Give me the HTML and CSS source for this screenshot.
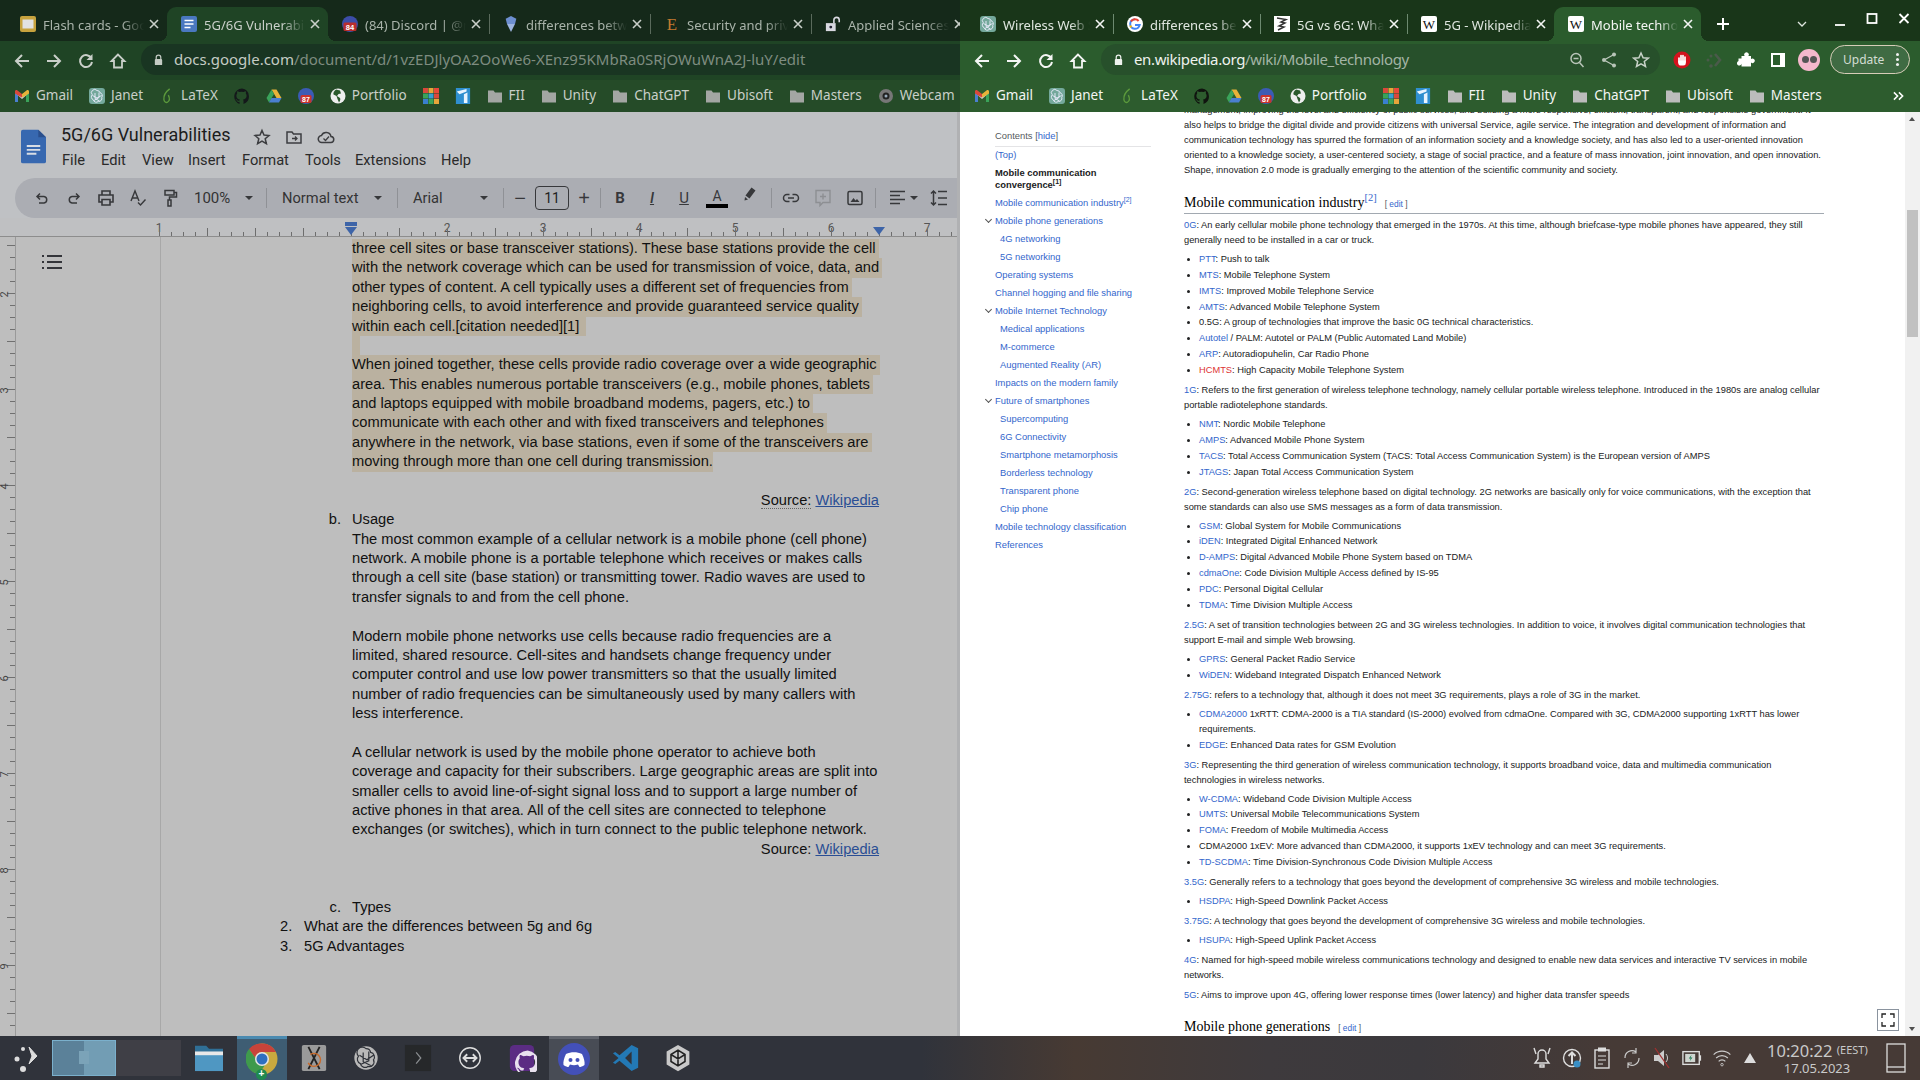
FILE: index.html
```html
<!DOCTYPE html>
<html lang="en">
<head>
<meta charset="utf-8">
<title>Desktop</title>
<link rel="stylesheet" href="styles.css">
</head>
<body>
<svg class="defs" width="0" height="0">
  <symbol id="i-x" viewBox="0 0 12 12"><path d="M2 2l8 8M10 2l-8 8" fill="none" stroke="currentColor" stroke-width="1.600"/></symbol>
  <symbol id="i-back" viewBox="0 0 18 18"><path d="M16 9H3M9 3L3 9l6 6" fill="none" stroke="currentColor" stroke-width="2"/></symbol>
  <symbol id="i-fwd" viewBox="0 0 18 18"><path d="M2 9h13M9 3l6 6-6 6" fill="none" stroke="currentColor" stroke-width="2"/></symbol>
  <symbol id="i-reload" viewBox="0 0 18 18"><path d="M14.500 6.500A6 6 0 1 0 15 10" fill="none" stroke="currentColor" stroke-width="2"/><path d="M15.500 2v6h-6z" fill="currentColor"/></symbol>
  <symbol id="i-home" viewBox="0 0 18 18"><path d="M9 2.500L2.500 9H5v6.500h8V9h2.500z" fill="none" stroke="currentColor" stroke-width="1.800"/></symbol>
  <symbol id="i-lock" viewBox="0 0 12 14"><path d="M3.500 6V4.200a2.500 2.500 0 0 1 5 0V6" fill="none" stroke="currentColor" stroke-width="1.300"/><rect x="2" y="6" width="8" height="6.500" rx="1" fill="currentColor"/></symbol>
  <symbol id="i-folder" viewBox="0 0 16 16"><path d="M1 2.500h5.500L8 4.500h7v10H1z" fill="currentColor"/></symbol>
  <symbol id="i-gmail" viewBox="0 0 16 14"><path d="M1 13V2l7 6 7-6v11h-3V6.500L8 10 4 6.500V13z" fill="#cfcfcf"/><path d="M1 5V2.500C1 1 2.500.6 3.500 1.400L8 5 8 8.500z" fill="#d9483b"/><path d="M15 5V2.500c0-1.500-1.500-1.900-2.500-1.100L8 5v3.500z" fill="#e8b23a"/><path d="M1 4.500V13h3V6.500z" fill="#4a7fd0"/><path d="M15 4.500V13h-3V6.500z" fill="#3aa35a"/></symbol>
  <symbol id="i-gpt" viewBox="0 0 16 16"><rect width="16" height="16" rx="3" fill="#74a89b"/><path d="M8 2.500a3 3 0 0 1 3 2.200 3 3 0 0 1 1.700 4.700 3 3 0 0 1-3.400 4 3 3 0 0 1-5-1.600 3 3 0 0 1-1-5A3 3 0 0 1 8 2.500zM6 5v5.500l4.500 2.500M10 4.500v5L5 12.500M3.500 7.500L8 10l4.500-2.500" fill="none" stroke="#eef" stroke-width=".9"/></symbol>
  <symbol id="i-latex" viewBox="0 0 16 18"><path d="M11 1C7 4 4 8 4.500 13c.2 2.500 2.500 4 4 3C11 14.500 11 11 9.500 8" fill="none" stroke="#5c9a3c" stroke-width="1.500"/></symbol>
  <symbol id="i-github" viewBox="0 0 16 16"><path d="M8 .5a8 8 0 0 0-2.500 15.500v-2.200c-2.200.5-2.700-1-2.700-1-.4-1-.9-1.200-.9-1.200-.7-.5 0-.5 0-.5.800.1 1.200.8 1.200.8.700 1.200 1.900.9 2.400.7 0-.5.300-.9.500-1.100-1.800-.2-3.600-.9-3.600-4 0-.9.300-1.600.800-2.100-.1-.2-.3-1 .1-2.100 0 0 .7-.2 2.200.8a7.500 7.500 0 0 1 4 0c1.500-1 2.200-.8 2.200-.8.400 1.100.2 1.900.1 2.100.5.5.8 1.200.8 2.100 0 3.100-1.900 3.800-3.700 4 .3.300.6.800.6 1.500V16A8 8 0 0 0 8 .5z" fill="currentColor"/></symbol>
  <symbol id="i-drive" viewBox="0 0 16 15"><path d="M5.500 1h5l5 8.500h-5z" fill="#e8b23a"/><path d="M5.500 1L.5 9.500 3 14l5-8.500z" fill="#3aa35a"/><path d="M3 14h10l2.500-4.500h-10z" fill="#4a7fd0"/></symbol>
  <symbol id="i-cal" viewBox="0 0 16 16"><circle cx="8" cy="8" r="8" fill="#3b5bb5"/><rect x="2.500" y="7" width="11" height="8" rx="1.500" fill="#c8332d"/><text x="8" y="13.500" font-family="Liberation Sans" font-size="7" font-weight="700" fill="#fff" text-anchor="middle">87</text></symbol>
  <symbol id="i-globe" viewBox="0 0 16 16"><circle cx="8" cy="8" r="7.500" fill="#eee"/><path d="M6 1.500C4 3 3 5 3.500 6.500l3 1.500 1 3 1.500 3.500c1.500-2 1.500-3.500 1-4.500L7 8 8.500 6 11 5.500 10 2.500z" fill="#2a5a2c"/></symbol>
  <symbol id="i-tink" viewBox="0 0 16 16"><rect width="5" height="5" fill="#d9483b"/><rect x="5.500" width="5" height="5" fill="#e8a53a"/><rect x="11" width="5" height="5" fill="#e8483b"/><rect y="5.500" width="5" height="5" fill="#3aa35a"/><rect x="5.500" y="5.500" width="5" height="5" fill="#3aa0d0"/><rect x="11" y="5.500" width="5" height="5" fill="#d9483b"/><rect y="11" width="5" height="5" fill="#3a7fd0"/><rect x="5.500" y="11" width="5" height="5" fill="#3aa35a"/><rect x="11" y="11" width="5" height="5" fill="#e8a53a"/></symbol>
  <symbol id="i-flag" viewBox="0 0 16 18"><rect width="16" height="18" fill="#2f8fd0"/><path d="M1 4l11-3v3L4 7z M9 7l4-2v12H9z" fill="#e8f4ff"/></symbol>
  <symbol id="i-wiki" viewBox="0 0 16 16"><rect width="16" height="16" rx="2" fill="#fff"/><text x="8" y="13" font-family="Liberation Serif" font-size="13" fill="#111" text-anchor="middle">W</text></symbol>
</svg>

<div class="desktop">
  <section class="window dim">
    <div class="tabstrip">
      <div class="tab"><svg class="favicon" viewBox="0 0 16 16"><rect width="16" height="16" rx="2" fill="#c7a33e"/><rect x="2.500" y="3.500" width="11" height="9" fill="#e2e2e2"/></svg><span class="title">Flash cards - Google</span><svg class="close"><use href="#i-x"/></svg></div>
      <div class="tab active"><svg class="favicon" viewBox="0 0 16 16"><rect width="16" height="16" rx="2" fill="#4a78c0"/><path d="M3.500 4.500h9M3.500 8h9M3.500 11.500h6" stroke="#fff" stroke-width="1.600"/></svg><span class="title">5G/6G Vulnerabilities</span><svg class="close"><use href="#i-x"/></svg></div>
      <div class="tab"><svg class="favicon" viewBox="0 0 16 16"><circle cx="8" cy="8" r="8" fill="#3c4da8"/><rect x="1.500" y="6.500" width="13" height="8.500" rx="1.500" fill="#b92d2d"/><text x="8" y="13.500" font-family="Liberation Sans" font-size="7.500" font-weight="700" fill="#fff" text-anchor="middle">84</text></svg><span class="title">(84) Discord | @me | Discord</span><svg class="close"><use href="#i-x"/></svg></div>
      <i class="tabsep"></i>
      <div class="tab"><svg class="favicon" viewBox="0 0 16 18"><path d="M2 3l6-3 6 3-1.500 6H3.500z" fill="#6d8fd0"/><path d="M3.500 9h9L8 18z" fill="#9db5e0"/></svg><span class="title">differences between</span><svg class="close"><use href="#i-x"/></svg></div>
      <i class="tabsep"></i>
      <div class="tab"><svg class="favicon" viewBox="0 0 16 18"><text x="8" y="16" font-family="Liberation Serif" font-size="19" fill="#c27a30" text-anchor="middle">E</text></svg><span class="title">Security and privacy</span><svg class="close"><use href="#i-x"/></svg></div>
      <i class="tabsep"></i>
      <div class="tab"><svg class="favicon" viewBox="0 0 16 18"><path d="M9 8V4.500a3 3 0 0 1 6 0V7" fill="none" stroke="#d8d8e0" stroke-width="1.800"/><rect y="8" width="11" height="9" fill="#d8d8e0"/><circle cx="5.500" cy="12.500" r="1.600" fill="#223"/></svg><span class="title">Applied Sciences</span><svg class="close"><use href="#i-x"/></svg></div>
    </div>
    <div class="toolbar">
      <div class="navs">
        <svg class="nav"><use href="#i-back"/></svg><svg class="nav"><use href="#i-fwd"/></svg><svg class="nav"><use href="#i-reload"/></svg><svg class="nav"><use href="#i-home"/></svg>
      </div>
      <div class="omni"><svg class="lock"><use href="#i-lock"/></svg><span class="url"><b>docs.google.com</b>/document/d/1vzEDJlyOA2OoWe6-XEnz95KMbRa0SRjOWuWnA2J-luY/edit</span></div>
    </div>
    <div class="bookmarks">
      <span class="bm"><svg class="bi"><use href="#i-gmail"/></svg>Gmail</span>
      <span class="bm"><svg class="bi"><use href="#i-gpt"/></svg>Janet</span>
      <span class="bm"><svg class="bi"><use href="#i-latex"/></svg>LaTeX</span>
      <span class="bm only ghd"><svg class="bi"><use href="#i-github"/></svg></span>
      <span class="bm only"><svg class="bi"><use href="#i-drive"/></svg></span>
      <span class="bm only"><svg class="bi"><use href="#i-cal"/></svg></span>
      <span class="bm"><svg class="bi"><use href="#i-globe"/></svg>Portfolio</span>
      <span class="bm only"><svg class="bi"><use href="#i-tink"/></svg></span>
      <span class="bm only"><svg class="bi"><use href="#i-flag"/></svg></span>
      <span class="bm"><svg class="bi fold"><use href="#i-folder"/></svg>FII</span>
      <span class="bm"><svg class="bi fold"><use href="#i-folder"/></svg>Unity</span>
      <span class="bm"><svg class="bi fold"><use href="#i-folder"/></svg>ChatGPT</span>
      <span class="bm"><svg class="bi fold"><use href="#i-folder"/></svg>Ubisoft</span>
      <span class="bm"><svg class="bi fold"><use href="#i-folder"/></svg>Masters</span>
      <span class="bm"><svg class="bi" viewBox="0 0 16 16"><circle cx="8" cy="8" r="7" fill="#777"/><circle cx="8" cy="8" r="3.500" fill="#222"/><circle cx="8" cy="8" r="1.500" fill="#9ab"/></svg>Webcam</span>
    </div>

    <div class="docs">
      <header class="docs-head">
        <svg class="docs-logo" viewBox="0 0 26 35"><path d="M2 0h16l8 8v25a2 2 0 0 1-2 2H2a2 2 0 0 1-2-2V2a2 2 0 0 1 2-2z" fill="#3768b0"/><path d="M18 0l8 8h-8z" fill="#2a4f8c"/><path d="M6 17h14M6 21h14M6 25h10" stroke="#d8dde5" stroke-width="2"/></svg>
        <div class="docs-titles">
          <div class="docs-titlerow">
            <span class="docs-title">5G/6G Vulnerabilities</span>
            <svg class="ti" viewBox="0 0 18 18"><path d="M9 2.500l2 4.600 5 .4-3.800 3.300 1.200 4.900L9 13.100l-4.400 2.600 1.200-4.900L2 7.500l5-.4z" fill="none" stroke="#3c3d40" stroke-width="1.500"/></svg>
            <svg class="ti" viewBox="0 0 18 18"><path d="M2 4h5l1.500 2H16v9H2z" fill="none" stroke="#3c3d40" stroke-width="1.500"/><path d="M7 10.500h5M10 8.500l2 2-2 2" fill="none" stroke="#3c3d40" stroke-width="1.300"/></svg>
            <svg class="ti" viewBox="0 0 18 18"><path d="M5 14.500a3.500 3.500 0 0 1-.5-7A5 5 0 0 1 14 8.500a3 3 0 0 1-.5 6z" fill="none" stroke="#3c3d40" stroke-width="1.500"/><path d="M6.500 10.500L8.500 12.500 12 8.500" fill="none" stroke="#3c3d40" stroke-width="1.300"/></svg>
          </div>
          <nav class="menu"><span class="m1">File</span><span class="m2">Edit</span><span class="m3">View</span><span class="m4">Insert</span><span class="m5">Format</span><span class="m6">Tools</span><span class="m7">Extensions</span><span>Help</span></nav>
        </div>
      </header>
      <div class="pill">
        <svg class="ic" viewBox="0 0 20 20"><path d="M7 15h5a3.300 3.300 0 0 0 0-6.500H5M8 5.500l-3 3 3 3" fill="none" stroke="#37383b" stroke-width="1.500"/></svg>
        <svg class="ic" viewBox="0 0 20 20"><path d="M13 15H8a3.300 3.300 0 0 1 0-6.500h7M12 5.500l3 3-3 3" fill="none" stroke="#37383b" stroke-width="1.500"/></svg>
        <svg class="ic" viewBox="0 0 20 20"><path d="M6 7V3h8v4M6 14H3V7h14v7h-3M6 11.500h8V17H6z" fill="none" stroke="#37383b" stroke-width="1.600"/></svg>
        <svg class="ic" viewBox="0 0 20 20"><path d="M3 13L7 3l4 10M4.500 10h5M10 14.500l2.500 2.500 5-5.500" fill="none" stroke="#37383b" stroke-width="1.400"/></svg>
        <svg class="ic" viewBox="0 0 20 20"><path d="M5 2.500h9V7H5zM14 4.500h2.500v4.500H9.500v3M8 12h3v6H8z" fill="none" stroke="#37383b" stroke-width="1.500"/></svg>
        <span class="drop zoomv">100%<i class="caret"></i></span><i class="psep"></i>
        <span class="drop stylev">Normal text<i class="caret"></i></span><i class="psep"></i>
        <span class="drop fontv">Arial<i class="caret"></i></span><i class="psep"></i>
        <span class="pm first">−</span><span class="size">11</span><span class="pm">+</span><i class="psep after-plus"></i>
        <span class="fmt b">B</span><span class="fmt it">I</span><span class="fmt un">U</span><span class="fmt ca">A</span>
        <svg class="ic pen" viewBox="0 0 20 20"><path d="M11.500 2.500l4 3-6 8-4-3zM5 12l3 2.500-3.500 1z" fill="#37383b"/></svg><i class="psep after-pen"></i>
        <svg class="ic link" viewBox="0 0 20 20"><path d="M8.500 6.500H6a3.500 3.500 0 0 0 0 7h2.500M11.500 6.500H14a3.500 3.500 0 0 1 0 7h-2.500M7 10h6" fill="none" stroke="#37383b" stroke-width="1.500"/></svg>
        <svg class="ic" viewBox="0 0 20 20"><path d="M3 2.500h14v12H10l-3 3v-3H3z" fill="none" stroke="#8d8f93" stroke-width="1.400"/><path d="M10 5.500v6M7 8.500h6" stroke="#8d8f93" stroke-width="1.400"/></svg>
        <svg class="ic" viewBox="0 0 20 20"><rect x="3" y="3.500" width="14" height="13" rx="1.500" fill="none" stroke="#37383b" stroke-width="1.500"/><path d="M5.500 14l3-4 2 2.500 1.500-1.500 2.500 3z" fill="#37383b"/></svg><i class="psep after-img"></i>
        <span class="align"><svg class="ic" viewBox="0 0 20 20"><path d="M2 3.500h15M2 7.500h10M2 11.500h15M2 15.500h10" stroke="#37383b" stroke-width="1.600"/></svg><i class="caret"></i></span>
        <svg class="ic" viewBox="0 0 20 20"><path d="M9 3.500h9M9 10h9M9 16.500h9M4.500 3v14M2 5.500L4.500 3 7 5.500M2 14.500L4.500 17 7 14.500" fill="none" stroke="#37383b" stroke-width="1.500"/></svg>
      </div>
      <div class="ruler">
        <span></span><span>1</span><span></span><span></span><span>2</span><span>3</span><span>4</span><span>5</span><span>6</span><span>7</span>
        <i class="mark left"></i><i class="mark right"></i>
      </div>
      <div class="docbody">
        <div class="vruler"><span>2</span><span>3</span><span>4</span><span>5</span><span>6</span><span>7</span><span>8</span><span>9</span></div>
        <aside class="outline"><svg viewBox="0 0 20 16" width="20" height="16"><path d="M5 2h15M5 8h15M5 14h15" stroke="#34353a" stroke-width="2"/><path d="M0 2h2M0 8h2M0 14h2" stroke="#34353a" stroke-width="2"/></svg></aside>
        <article class="page">
          <div class="ln hl">three cell sites or base transceiver stations). These base stations provide the cell</div>
          <div class="ln hl">with the network coverage which can be used for transmission of voice, data, and</div>
          <div class="ln hl">other types of content. A cell typically uses a different set of frequencies from</div>
          <div class="ln hl">neighboring cells, to avoid interference and provide guaranteed service quality</div>
          <div class="ln hl">within each cell.[citation needed][1]&nbsp;</div>
          <div class="ln hl blankhl">&nbsp;</div>
          <div class="ln hl">When joined together, these cells provide radio coverage over a wide geographic</div>
          <div class="ln hl">area. This enables numerous portable transceivers (e.g., mobile phones, tablets</div>
          <div class="ln hl">and laptops equipped with mobile broadband modems, pagers, etc.) to</div>
          <div class="ln hl">communicate with each other and with fixed transceivers and telephones</div>
          <div class="ln hl">anywhere in the network, via base stations, even if some of the transceivers are</div>
          <div class="ln hl nopad">moving through more than one cell during transmission.</div>
          <div class="ln">&nbsp;</div>
          <div class="ln src"><span class="dotted">Source:</span> <a>Wikipedia</a></div>
          <div class="ln"><span class="num">b.</span>Usage</div>
          <div class="ln">The most common example of a cellular network is a mobile phone (cell phone)</div>
          <div class="ln">network. A mobile phone is a portable telephone which receives or makes calls</div>
          <div class="ln">through a cell site (base station) or transmitting tower. Radio waves are used to</div>
          <div class="ln">transfer signals to and from the cell phone.</div>
          <div class="ln">&nbsp;</div>
          <div class="ln">Modern mobile phone networks use cells because radio frequencies are a</div>
          <div class="ln">limited, shared resource. Cell-sites and handsets change frequency under</div>
          <div class="ln">computer control and use low power transmitters so that the usually limited</div>
          <div class="ln">number of radio frequencies can be simultaneously used by many callers with</div>
          <div class="ln">less interference.</div>
          <div class="ln">&nbsp;</div>
          <div class="ln">A cellular network is used by the mobile phone operator to achieve both</div>
          <div class="ln">coverage and capacity for their subscribers. Large geographic areas are split into</div>
          <div class="ln">smaller cells to avoid line-of-sight signal loss and to support a large number of</div>
          <div class="ln">active phones in that area. All of the cell sites are connected to telephone</div>
          <div class="ln">exchanges (or switches), which in turn connect to the public telephone network.</div>
          <div class="ln src"><span>Source:</span> <a>Wikipedia</a></div>
          <div class="ln">&nbsp;</div>
          <div class="ln">&nbsp;</div>
          <div class="ln"><span class="num">c.</span>Types</div>
          <div class="ln outer"><span class="num">2.</span>What are the differences between 5g and 6g</div>
          <div class="ln outer"><span class="num">3.</span>5G Advantages</div>
        </article>
      </div>
    </div>
  </section>

  <section class="window light">
    <div class="tabstrip">
      <div class="tab rt"><svg class="favicon"><use href="#i-gpt"/></svg><span class="title">Wireless Web Security</span><svg class="close"><use href="#i-x"/></svg></div>
      <i class="tabsep"></i>
      <div class="tab rt"><svg class="favicon" viewBox="0 0 16 16"><circle cx="8" cy="8" r="8" fill="#fff"/><path d="M8 3.200a4.800 4.800 0 1 0 4.700 5.700H8" fill="none" stroke="#4285f4" stroke-width="2"/><path d="M4 5.300A4.800 4.800 0 0 1 11.600 5" fill="none" stroke="#ea4335" stroke-width="2"/><path d="M3.300 9.500a4.800 4.800 0 0 0 1 1.800" fill="none" stroke="#fbbc05" stroke-width="2"/></svg><span class="title">differences between</span><svg class="close"><use href="#i-x"/></svg></div>
      <i class="tabsep"></i>
      <div class="tab rt"><svg class="favicon" viewBox="0 0 16 16"><rect width="16" height="16" fill="#fff"/><path d="M3 2l9 1.500L7 6l4 1-6 3 5 1-6 3" fill="none" stroke="#333" stroke-width="1.400"/></svg><span class="title">5G vs 6G: What are</span><svg class="close"><use href="#i-x"/></svg></div>
      <i class="tabsep"></i>
      <div class="tab rt"><svg class="favicon"><use href="#i-wiki"/></svg><span class="title">5G - Wikipedia</span><svg class="close"><use href="#i-x"/></svg></div>
      <div class="tab rt active"><svg class="favicon"><use href="#i-wiki"/></svg><span class="title">Mobile technology</span><svg class="close"><use href="#i-x"/></svg></div>
      <svg class="plus" viewBox="0 0 14 14"><path d="M7 1v12M1 7h12" stroke="#fff" stroke-width="2"/></svg>
      <div class="winctl">
        <svg viewBox="0 0 12 12"><path d="M2 4l4 4 4-4" fill="none" stroke="#dfe6df" stroke-width="1.300"/></svg>
        <svg viewBox="0 0 12 12"><path d="M1 8h10" stroke="#fff" stroke-width="1.800"/></svg>
        <svg viewBox="0 0 12 12"><rect x="1.500" y="1" width="9" height="9" fill="none" stroke="#fff" stroke-width="1.800"/></svg>
        <svg viewBox="0 0 12 12"><path d="M1.500 1l9 9M10.500 1l-9 9" stroke="#fff" stroke-width="1.800"/></svg>
      </div>
    </div>
    <div class="toolbar">
      <div class="navs">
        <svg class="nav"><use href="#i-back"/></svg><svg class="nav"><use href="#i-fwd"/></svg><svg class="nav"><use href="#i-reload"/></svg><svg class="nav"><use href="#i-home"/></svg>
      </div>
      <div class="omni short"><svg class="lock"><use href="#i-lock"/></svg><span class="url"><b>en.wikipedia.org</b>/wiki/Mobile_technology</span>
        <span class="omni-ics">
          <svg viewBox="0 0 18 18"><circle cx="8" cy="7.500" r="5" fill="none" stroke="#b8c4b8" stroke-width="1.500"/><path d="M11.500 11.500l4 4.500M5.500 7.500h5" stroke="#b8c4b8" stroke-width="1.500"/></svg>
          <svg viewBox="0 0 18 18"><circle cx="14" cy="3.500" r="2" fill="#b8c4b8"/><circle cx="4" cy="9" r="2" fill="#b8c4b8"/><circle cx="14" cy="14.500" r="2" fill="#b8c4b8"/><path d="M14 3.500L4 9l10 5.500" fill="none" stroke="#b8c4b8" stroke-width="1.300"/></svg>
          <svg viewBox="0 0 18 18"><path d="M9 2l2.100 4.800 5.100.4-3.900 3.300 1.200 5L9 12.800l-4.500 2.700 1.200-5-3.900-3.300 5.100-.4z" fill="none" stroke="#c8d2c8" stroke-width="1.500"/></svg>
        </span>
      </div>
      <div class="ext">
        <svg viewBox="0 0 18 18"><circle cx="9" cy="9" r="8.500" fill="#d4121d"/><path d="M6 11V7M8 11V4.500M10 11V4.500M12 11V6" stroke="#fff" stroke-width="1.700" stroke-linecap="round"/><path d="M5.200 9.500h7.600v2.500a2.500 2.500 0 0 1-2.500 2.500H8a2.800 2.800 0 0 1-2.800-2.800z" fill="#fff"/></svg>
        <svg viewBox="0 0 18 18"><path d="M10 3l5 6-5 6" fill="none" stroke="#4a5a4a" stroke-width="2.600"/><circle cx="3" cy="9" r="1.500" fill="#4a5a4a"/><circle cx="6" cy="5" r="1.500" fill="#4a5a4a"/><circle cx="6" cy="15" r="1.800" fill="#4a5a4a"/></svg>
        <svg viewBox="0 0 18 18"><path d="M1.500 7.500h3V5h3.200a2.300 2.300 0 1 1 3.600 0H14v3a2.300 2.300 0 1 1 0 3.600V15.500H4.500v-2.700a2.300 2.300 0 1 1-3-2.700z" fill="#fff"/></svg>
        <svg viewBox="0 0 18 18"><path d="M2 2h14v14H2z" fill="#fff"/><path d="M4 4h7v10H4z" fill="#2b5c2d"/></svg>
        <span class="avatar"><i></i><i></i></span>
        <span class="update">Update<em></em></span>
      </div>
    </div>
    <div class="bookmarks">
      <span class="bm"><svg class="bi"><use href="#i-gmail"/></svg>Gmail</span>
      <span class="bm"><svg class="bi"><use href="#i-gpt"/></svg>Janet</span>
      <span class="bm"><svg class="bi"><use href="#i-latex"/></svg>LaTeX</span>
      <span class="bm only ghd"><svg class="bi"><use href="#i-github"/></svg></span>
      <span class="bm only"><svg class="bi"><use href="#i-drive"/></svg></span>
      <span class="bm only"><svg class="bi"><use href="#i-cal"/></svg></span>
      <span class="bm"><svg class="bi"><use href="#i-globe"/></svg>Portfolio</span>
      <span class="bm only"><svg class="bi"><use href="#i-tink"/></svg></span>
      <span class="bm only"><svg class="bi"><use href="#i-flag"/></svg></span>
      <span class="bm"><svg class="bi fold"><use href="#i-folder"/></svg>FII</span>
      <span class="bm"><svg class="bi fold"><use href="#i-folder"/></svg>Unity</span>
      <span class="bm"><svg class="bi fold"><use href="#i-folder"/></svg>ChatGPT</span>
      <span class="bm"><svg class="bi fold"><use href="#i-folder"/></svg>Ubisoft</span>
      <span class="bm"><svg class="bi fold"><use href="#i-folder"/></svg>Masters</span>
      <svg class="more" viewBox="0 0 12 10"><path d="M1 1l4 4-4 4M6.500 1l4 4-4 4" fill="none" stroke="#fff" stroke-width="1.700"/></svg>
    </div>

    <div class="wiki">
      <nav class="toc">
        <div class="toc-head">Contents <span class="lk-plain">[<a>hide</a>]</span></div>
        <a class="t">(Top)</a>
        <div class="t cur">Mobile communication convergence<sup>[1]</sup></div>
        <a class="t">Mobile communication industry<sup>[2]</sup></a>
        <a class="t tw">Mobile phone generations</a>
        <a class="t c">4G networking</a>
        <a class="t c">5G networking</a>
        <a class="t">Operating systems</a>
        <a class="t">Channel hogging and file sharing</a>
        <a class="t tw">Mobile Internet Technology</a>
        <a class="t c">Medical applications</a>
        <a class="t c">M-commerce</a>
        <a class="t c">Augmented Reality (AR)</a>
        <a class="t">Impacts on the modern family</a>
        <a class="t tw">Future of smartphones</a>
        <a class="t c">Supercomputing</a>
        <a class="t c">6G Connectivity</a>
        <a class="t c">Smartphone metamorphosis</a>
        <a class="t c">Borderless technology</a>
        <a class="t c">Transparent phone</a>
        <a class="t c">Chip phone</a>
        <a class="t">Mobile technology classification</a>
        <a class="t">References</a>
      </nav>
      <main class="article">
        <p>management, improving the level and efficiency of public services, and building a more responsive, efficient, transparent, and responsible government. It also helps to bridge the digital divide and provide citizens with universal Service, agile service. The integration and development of information and communication technology has spurred the formation of an information society and a knowledge society, and has also led to a user-oriented innovation oriented to a knowledge society, a user-centered society, a stage of social practice, and a feature of mass innovation, joint innovation, and open innovation. Shape, innovation 2.0 mode is gradually emerging to the attention of the scientific community and society.</p>
        <h2>Mobile communication industry<sup>[2]</sup><span class="edit">[ <a>edit</a> ]</span></h2>
        <p><a>0G</a>: An early cellular mobile phone technology that emerged in the 1970s. At this time, although briefcase-type mobile phones have appeared, they still generally need to be installed in a car or truck.</p>
        <ul>
          <li><a>PTT</a>: Push to talk</li>
          <li><a>MTS</a>: Mobile Telephone System</li>
          <li><a>IMTS</a>: Improved Mobile Telephone Service</li>
          <li><a>AMTS</a>: Advanced Mobile Telephone System</li>
          <li>0.5G: A group of technologies that improve the basic 0G technical characteristics.</li>
          <li><a>Autotel</a> / PALM: Autotel or PALM (Public Automated Land Mobile)</li>
          <li><a>ARP</a>: Autoradiopuhelin, Car Radio Phone</li>
          <li><a class="red">HCMTS</a>: High Capacity Mobile Telephone System</li>
        </ul>
        <p><a>1G</a>: Refers to the first generation of wireless telephone technology, namely cellular portable wireless telephone. Introduced in the 1980s are analog cellular portable radiotelephone standards.</p>
        <ul>
          <li><a>NMT</a>: Nordic Mobile Telephone</li>
          <li><a>AMPS</a>: Advanced Mobile Phone System</li>
          <li><a>TACS</a>: Total Access Communication System (TACS: Total Access Communication System) is the European version of AMPS</li>
          <li><a>JTAGS</a>: Japan Total Access Communication System</li>
        </ul>
        <p><a>2G</a>: Second-generation wireless telephone based on digital technology. 2G networks are basically only for voice communications, with the exception that some standards can also use SMS messages as a form of data transmission.</p>
        <ul>
          <li><a>GSM</a>: Global System for Mobile Communications</li>
          <li><a>iDEN</a>: Integrated Digital Enhanced Network</li>
          <li><a>D-AMPS</a>: Digital Advanced Mobile Phone System based on TDMA</li>
          <li><a>cdmaOne</a>: Code Division Multiple Access defined by IS-95</li>
          <li><a>PDC</a>: Personal Digital Cellular</li>
          <li><a>TDMA</a>: Time Division Multiple Access</li>
        </ul>
        <p><a>2.5G</a>: A set of transition technologies between 2G and 3G wireless technologies. In addition to voice, it involves digital communication technologies that support E-mail and simple Web browsing.</p>
        <ul>
          <li><a>GPRS</a>: General Packet Radio Service</li>
          <li><a>WiDEN</a>: Wideband Integrated Dispatch Enhanced Network</li>
        </ul>
        <p><a>2.75G</a>: refers to a technology that, although it does not meet 3G requirements, plays a role of 3G in the market.</p>
        <ul>
          <li><a>CDMA2000</a> 1xRTT: CDMA-2000 is a TIA standard (IS-2000) evolved from cdmaOne. Compared with 3G, CDMA2000 supporting 1xRTT has lower requirements.</li>
          <li><a>EDGE</a>: Enhanced Data rates for GSM Evolution</li>
        </ul>
        <p><a>3G</a>: Representing the third generation of wireless communication technology, it supports broadband voice, data and multimedia communication technologies in wireless networks.</p>
        <ul>
          <li><a>W-CDMA</a>: Wideband Code Division Multiple Access</li>
          <li><a>UMTS</a>: Universal Mobile Telecommunications System</li>
          <li><a>FOMA</a>: Freedom of Mobile Multimedia Access</li>
          <li>CDMA2000 1xEV: More advanced than CDMA2000, it supports 1xEV technology and can meet 3G requirements.</li>
          <li><a>TD-SCDMA</a>: Time Division-Synchronous Code Division Multiple Access</li>
        </ul>
        <p><a>3.5G</a>: Generally refers to a technology that goes beyond the development of comprehensive 3G wireless and mobile technologies.</p>
        <ul>
          <li><a>HSDPA</a>: High-Speed Downlink Packet Access</li>
        </ul>
        <p><a>3.75G</a>: A technology that goes beyond the development of comprehensive 3G wireless and mobile technologies.</p>
        <ul>
          <li><a>HSUPA</a>: High-Speed Uplink Packet Access</li>
        </ul>
        <p><a>4G</a>: Named for high-speed mobile wireless communications technology and designed to enable new data services and interactive TV services in mobile networks.</p>
        <p class="gap"><a>5G</a>: Aims to improve upon 4G, offering lower response times (lower latency) and higher data transfer speeds</p>
        <h2 class="h2b">Mobile phone generations<span class="edit">[ <a>edit</a> ]</span></h2>
      </main>
      <button class="fs" type="button" aria-label="Fullscreen"><svg viewBox="0 0 14 14" width="14" height="14"><path d="M1 5V1h4M9 1h4v4M13 9v4H9M5 13H1V9" fill="none" stroke="#222" stroke-width="1.300"/></svg></button>
      <div class="scroll"><i class="up"></i><div class="thumb"></div><i class="down"></i></div>
    </div>
  </section>
</div>

<footer class="taskbar">
  <svg class="launcher" viewBox="0 0 26 32"><circle cx="4" cy="17" r="2.500" fill="#ddd"/><circle cx="10" cy="7" r="2" fill="#ddd"/><circle cx="10" cy="27" r="3" fill="#ddd"/><path d="M16 5l8 9-8 8 3-8z" fill="#ddd" stroke="#ddd"/></svg>
  <div class="pager"><div class="pg on"><i></i></div><div class="pg"></div></div>
  <span class="tk tfold"><svg viewBox="0 0 32 30"><path d="M1 2h12l3 3h15v24H1z" fill="#2f6f96"/><path d="M1 8h30v6H1z" fill="#e8e8e8"/><path d="M1 12h30v17H1z" fill="#4f97c2"/></svg></span>
  <span class="tk run blue"><svg viewBox="0 0 32 32"><circle cx="16" cy="16" r="15.500" fill="#c9a93f"/><path d="M16 .5A15.500 15.500 0 0 1 30 9H16A7 7 0 0 0 9 15L3 6A15.500 15.500 0 0 1 16 .5z" fill="#c8433a"/><path d="M3 6a15.500 15.500 0 0 0 10 25l6-9a7 7 0 0 1-9-6z" fill="#3f9a4c"/><circle cx="16" cy="16" r="7" fill="#e5e5e5"/><circle cx="16" cy="16" r="5.500" fill="#2f6fbf"/></svg><b class="plusbadge">+</b></span>
  <span class="tk"><svg viewBox="0 0 28 30"><rect x="1" y="1" width="26" height="28" rx="2" fill="#9a9a9a"/><path d="M8 3l12 24M20 3L8 27" stroke="#222" stroke-width="2"/><circle cx="14" cy="17" r="7" fill="none" stroke="#c96a2a" stroke-width="1.500" stroke-dasharray="18 10"/></svg></span>
  <span class="tk"><svg viewBox="0 0 26 30"><circle cx="13" cy="15" r="12.500" fill="#b9b9b9"/><path d="M13 5a5 5 0 0 1 5 4 5 5 0 0 1 3 8 5 5 0 0 1-6 7 5 5 0 0 1-8-3 5 5 0 0 1-2-8 5 5 0 0 1 8-8zM10 9v10l8 4M16 8v10l-9 4M6 12l8 5 7-5" fill="none" stroke="#2f3239" stroke-width="1.300"/></svg></span>
  <span class="tk"><svg viewBox="0 0 28 30"><rect x="0" y="1" width="28" height="28" fill="#26282a"/><path d="M12 9l5 6-5 6" fill="none" stroke="#8a8d90" stroke-width="1.300"/></svg></span>
  <span class="tk"><svg viewBox="0 0 24 30"><circle cx="12" cy="15" r="11" fill="none" stroke="#ddd" stroke-width="1.500"/><path d="M5 15h14M9 11l-4 4 4 4M15 11l4 4-4 4" fill="none" stroke="#ddd" stroke-width="2"/></svg></span>
  <span class="tk tgit"><svg viewBox="0 0 26 30"><rect y="1" width="26" height="28" rx="5" fill="#5b2c83"/><svg x="4" y="6" width="18" height="18"><use href="#i-github"/></svg></svg></span>
  <span class="tk run grey"><svg viewBox="0 0 32 32"><circle cx="16" cy="16" r="16" fill="#4350b8"/><path d="M8 11c5-2.500 11-2.500 16 0 2 4 3 8 2.500 11-2 1.500-4 2-5 2l-1.500-2.500c-3 1-5 1-8 0L10.500 24c-1 0-3-.5-5-2C5 19 6 15 8 11z" fill="#fff"/><circle cx="12.500" cy="17" r="2" fill="#4350b8"/><circle cx="19.500" cy="17" r="2" fill="#4350b8"/></svg></span>
  <span class="tk"><svg viewBox="0 0 28 30"><path d="M20 1l7 3.500v21L20 29 7 18l-4.500 3.500L0 20l6-5-6-5 2.500-1.500L7 12z" fill="#2379b5"/><path d="M20 8l-7 7 7 7z" fill="#30343b"/></svg></span>
  <span class="tk"><svg viewBox="0 0 28 32"><path d="M14 1l13 7.500v15L14 31 1 23.500v-15z" fill="#c9c9c9"/><path d="M14 7l8 5v8l-8 5-8-5v-8zM14 7v18M6 12l8 5 8-5" fill="none" stroke="#222" stroke-width="1.800"/></svg></span>
  <div class="tray">
    <svg viewBox="0 0 20 24"><path d="M10 4a4 4 0 0 1 4 4v5l3 4H3l3-4V8a4 4 0 0 1 4-4zM8 19h4v2H8zM2 2l2 6M18 2l-2 6" fill="none" stroke="#ddd" stroke-width="1.400"/></svg>
    <svg viewBox="0 0 20 24"><circle cx="10" cy="12" r="8.500" fill="none" stroke="#ddd" stroke-width="1.400"/><path d="M10 18V7M6.500 10L10 6.500 13.500 10" fill="none" stroke="#ddd" stroke-width="2"/><circle cx="15" cy="18" r="3.500" fill="#3a8fc5"/></svg>
    <svg viewBox="0 0 20 24"><rect x="3" y="4" width="14" height="18" fill="none" stroke="#ddd" stroke-width="1.400"/><rect x="6" y="1.500" width="8" height="4" fill="#ddd"/><path d="M6 10h8M6 14h8M6 18h5" stroke="#ddd"/></svg>
    <svg viewBox="0 0 20 24"><path d="M3 12a7 7 0 0 1 11-6M17 12a7 7 0 0 1-11 6M14 2v5h-4M6 22v-5h4" fill="none" stroke="#ccc" stroke-width="1.200"/></svg>
    <svg viewBox="0 0 20 24"><path d="M2 9h4l6-5v16l-6-5H2z" fill="#ccc"/><path d="M14 8a6 6 0 0 1 0 8" fill="none" stroke="#ccc"/><path d="M3 2l14 20" stroke="#a03030" stroke-width="1.300"/></svg>
    <svg viewBox="0 0 22 24"><rect x="1" y="5" width="18" height="14" fill="none" stroke="#ddd" stroke-width="1.500"/><rect x="3.500" y="7.500" width="11" height="9" fill="#cfd5d0"/><path d="M20 9v6" stroke="#ddd" stroke-width="2"/><path d="M10.500 8.500L7.500 12.500h2l-1 3 3-4h-2z" fill="#1d7a55"/></svg>
    <svg viewBox="0 0 24 24"><path d="M2 8a14 14 0 0 1 20 0M5 12a10 10 0 0 1 14 0M8 16a5.500 5.500 0 0 1 8 0" fill="none" stroke="#ccc" stroke-width="1.400"/><circle cx="12" cy="20" r="1.500" fill="none" stroke="#ccc"/></svg>
    <svg class="arrow" viewBox="0 0 14 12"><path d="M7 1l6 10H1z" fill="#ddd"/></svg>
    <div class="clock"><div class="time">10:20:22 <small>(EEST)</small></div><div class="date">17.05.2023</div></div>
    <svg class="desk" viewBox="0 0 20 30"><rect x="1" y="1" width="18" height="28" fill="none" stroke="#ddd" stroke-width="1.300"/><path d="M1 24h18" stroke="#ddd" stroke-width="1.300"/></svg>
  </div>
</footer>
</body>
</html>
```

FILE: styles.css
```css
* { box-sizing: border-box; }
html, body { margin: 0; height: 100%; overflow: hidden; }
body { width: 1920px; height: 1080px; display: flex; flex-direction: column; font-family: "Liberation Sans", Arial, sans-serif; background: #30333b; }
.defs { display: block; height: 0; }
svg { display: block; flex: none; }
.desktop { display: flex; height: 1036px; }
.window { width: 960px; height: 1036px; display: flex; flex-direction: column; overflow: hidden; }

/* window colours */
.dim { --strip: #15291a; --tabbar: #1f4425; --bmbar: #254b28; --omni: #193522; --fg: #c9cfc9; --tabfg: #a9b3aa; --urlb: #c4cbc4; --urlr: #7e8c80; --sep: #5a6a5c; }
.light { --strip: #193619; --tabbar: #2b5c2d; --bmbar: #2d5c2e; --omni: #27502b; --fg: #f4f6f4; --tabfg: #dfe6df; --urlb: #eef2ee; --urlr: #a3b4a5; --sep: #6d8a70; }

/* tab strip */
.tabstrip { height: 41px; background: var(--strip); padding: 7px 0 0 6px; display: flex; align-items: stretch; flex: none; }
.tab { width: 161px; flex: none; display: flex; align-items: center; padding: 0 7px 0 14px; color: var(--tabfg); font: 13px/1 "Noto Sans", sans-serif; position: relative; }
.tab.rt { width: 147px; }
.tab.active { background: var(--tabbar); border-radius: 9px 9px 0 0; color: var(--fg); }
.tab.active::before, .tab.active::after { content: ""; position: absolute; bottom: 0; width: 8px; height: 8px; }
.tab.active::before { left: -8px; background: radial-gradient(circle at 0 0, transparent 8px, var(--tabbar) 8px); }
.tab.active::after { right: -8px; background: radial-gradient(circle at 100% 0, transparent 8px, var(--tabbar) 8px); }
.tabsep { width: 1px; height: 20px; margin: 7px -1px 0 0; background: var(--sep); flex: none; }
.favicon { width: 16px; height: 16px; }
.title { flex: 1; min-width: 0; margin-left: 7px; padding-top: 2px; white-space: nowrap; overflow: hidden; -webkit-mask-image: linear-gradient(to right, #000 78%, transparent); mask-image: linear-gradient(to right, #000 78%, transparent); }
.close { width: 12px; height: 12px; margin-left: 4px; color: var(--fg); }
.plus { width: 14px; height: 14px; margin: 10px 0 0 15px; }
.winctl { margin-left: auto; display: flex; gap: 20px; padding: 5px 10px 0 0; align-items: flex-start; }
.winctl svg { width: 12px; height: 12px; margin-top: 1px; }
.winctl svg:first-child { margin-right: 6px; margin-top: 6px; }
.winctl svg:nth-child(2) { margin-top: 5px; }

/* toolbar */
.toolbar { height: 39px; background: var(--tabbar); display: flex; align-items: center; padding: 0 0 0 13px; flex: none; color: var(--fg); }
.navs { display: flex; gap: 14px; width: 128px; flex: none; }
.nav { width: 18px; height: 18px; }
.omni { flex: 1; height: 31px; margin-top: -2px; border-radius: 16px 0 0 16px; background: var(--omni); display: flex; align-items: center; padding-left: 12px; color: var(--urlr); min-width: 0; overflow: hidden; }
.omni.short { flex: none; width: 559px; border-radius: 16px; }
.lock { width: 11px; height: 14px; margin-right: 10px; color: var(--urlb); }
.url { font: 15px/1 "Noto Sans", sans-serif; white-space: nowrap; }
.short .url { letter-spacing: -.36px; }
.url b { font-weight: 400; color: var(--urlb); }
.omni-ics { margin-left: auto; display: flex; gap: 14px; padding-right: 10px; }
.omni-ics svg { width: 18px; height: 18px; }
.ext { display: flex; align-items: center; flex: 1; padding-left: 13px; margin-top: -2px; gap: 14px; }
.ext svg { width: 18px; height: 18px; }
.avatar { width: 22px; height: 22px; margin-left: -3px; border-radius: 50%; background: #f4b8cc; display: flex; align-items: center; justify-content: center; gap: 1px; flex: none; }
.avatar i { width: 7px; height: 7px; border-radius: 50%; background: #555; }
.update { margin-left: -4px; width: 80px; height: 29px; border: 1px solid #d6cdb8; border-radius: 15px; background: #3f6b43; color: #d3ddd3; font: 12px/27px "Noto Sans", sans-serif; padding: 0 10px 0 12px; display: flex; justify-content: space-between; flex: none; }
.update em { width: 3px; height: 3px; margin-top: 7px; background: #f0f0f0; border-radius: 50%; box-shadow: 0 5px #f0f0f0, 0 10px #f0f0f0; }

/* bookmarks */
.bookmarks { height: 32px; background: var(--bmbar); display: flex; align-items: center; padding: 0 0 0 14px; flex: none; color: var(--fg); font: 13.500px/1 "Noto Sans", sans-serif; white-space: nowrap; gap: 16px; overflow: hidden; }
.bm { display: flex; align-items: center; gap: 6px; flex: none; }
.bi { width: 16px; height: 16px; color: inherit; }
.ghd { color: #14181a; }
.light .ghd { color: #10140f; }
.fold { color: #bcbcbc; }
.dim .fold { color: #a3a6a3; }
.more { margin-left: auto; margin-right: 16px; width: 11px; height: 10px; }

/* docs */
.docs { flex: 1; min-height: 0; background: #bfc1c4; display: flex; flex-direction: column; color: #1c1c1c; border-right: 3px solid #b0b1b3; }
.docs-head { height: 66px; display: flex; padding: 17px 0 0 21px; flex: none; }
.docs-logo { width: 25px; height: 35px; }
.docs-titles { margin-left: 15px; margin-top: -7px; }
.docs-titlerow { display: flex; align-items: center; height: 26px; }
.docs-title { font: 18px/24px Roboto, sans-serif; width: 192px; color: #1c1c1c; }
.ti { width: 18px; height: 18px; margin-right: 14px; margin-top: 4px; }
.menu { display: flex; font: 14.670px/20px Roboto, sans-serif; color: #2a2a2a; margin-top: 2px; margin-left: 1px; white-space: nowrap; }
.menu span { flex: none; }
.m1 { width: 39px; } .m2 { width: 41px; } .m3 { width: 46px; } .m4 { width: 54px; } .m5 { width: 63px; } .m6 { width: 50px; } .m7 { width: 86px; }
.pill { height: 40px; margin-left: 15px; border-radius: 20px 0 0 20px; background: #abadb3; display: flex; align-items: center; padding-left: 17px; flex: none; }
.ic { width: 20px; height: 20px; margin-right: 12px; }
.pen { margin-top: -6px; }
.link { margin-left: -3px; }
.psep { width: 1px; height: 20px; background: #8f9196; flex: none; margin-right: 12px; }
.after-plus { margin-left: 6px; }
.after-pen { margin-left: -1px; }
.after-img { margin-left: -2px; }
.drop { display: flex; align-items: center; font: 14.670px/1 Roboto, sans-serif; color: #333; flex: none; }
.caret { width: 0; height: 0; border: 4px solid transparent; border-top: 4px solid #37383b; border-bottom: 0; margin-left: 10px; }
.zoomv { width: 63px; margin: 0 9px 0 2px; font-size: 15px; }
.stylev { width: 104px; margin: 0 11px 0 3px; }
.fontv { width: 79px; margin: 0 11px 0 3px; }
.zoomv .caret, .stylev .caret, .fontv .caret { margin-left: auto; margin-right: 4px; }
.pm { width: 20px; text-align: center; font: 20px/1 "Liberation Sans", sans-serif; color: #37383b; flex: none; }
.pm.first { margin-left: -6px; }
.size { width: 34px; height: 24px; margin: 0 5px; border: 1px solid #37383b; border-radius: 4px; text-align: center; font: 14px/22px Roboto, sans-serif; flex: none; color: #222; }
.fmt { width: 20px; margin-right: 12px; text-align: center; font: 15px/1 Roboto, sans-serif; color: #37383b; flex: none; }
.fmt.b { font-weight: 700; margin-left: -3px; }
.fmt.it { font: italic 500 15px/1 Roboto, sans-serif; text-decoration: underline; text-decoration-thickness: 1px; }
.fmt.un { text-decoration: underline; }
.fmt.ca { width: 22px; border-bottom: 4px solid #000; padding-bottom: 1px; font-size: 14px; }
.align { display: flex; align-items: center; width: 41px; flex: none; }
.align .ic { margin-right: 0; }
.align .caret { margin-left: 2px; }
.ruler { height: 19px; flex: none; position: relative; display: flex; background: #bfc0c2; border-bottom: 1px solid #8d8d8d; padding-left: 15px; font: 12px/18px Roboto, sans-serif; color: #555; overflow: hidden; }
.ruler::before { content: ""; position: absolute; left: 159px; right: 0; bottom: 0; height: 8px; background: repeating-linear-gradient(to right, #6e6e6e 0 1px, transparent 1px 48px); }
.ruler::after { content: ""; position: absolute; left: 159px; right: 0; bottom: 0; height: 4px; background: repeating-linear-gradient(to right, #6e6e6e 0 1px, transparent 1px 12px); }
.ruler span { width: 96px; flex: none; text-align: center; margin-top: 1px; }
.mark { position: absolute; bottom: 1px; width: 0; height: 0; border: 6px solid transparent; border-top: 8px solid #3d64a8; border-bottom: 0; z-index: 1; }
.mark.left { left: 345px; }
.mark.left::before { content: ""; position: absolute; left: -6px; top: -13px; width: 12px; height: 4px; background: #3d64a8; }
.mark.right { left: 873px; }
.docbody { flex: 1; min-height: 0; display: flex; background: #bebebe; }
.vruler { width: 16px; flex: none; border-right: 1px solid #999; background-color: #bebebe; background-image: linear-gradient(#707070 1px, transparent 1px), linear-gradient(#707070 1px, transparent 1px); background-size: 5px 12px, 8px 48px; background-position: right 8px, right 8px; background-repeat: repeat-y; font: 11px/1 Roboto, sans-serif; color: #444; padding: 52px 6px 0 0; display: flex; flex-direction: column; align-items: center; gap: 85px; }
.vruler span { transform: rotate(-90deg); display: block; line-height: 11px; }
.outline { width: 144px; flex: none; padding: 17px 0 0 26px; }
.page { flex: 1; border-left: 1px solid #a8a8a8; padding: 2px 0 0 191px; overflow: hidden; font: 14.670px/19.380px "Liberation Sans", Arial, sans-serif; color: #111; min-width: 0; }
.ln { width: fit-content; white-space: pre; position: relative; }
.hl { background: #bab1a0; padding-right: 3px; }
.hl.nopad { padding-right: 0; }
.blankhl { padding: 0; width: 8px; }
.src { margin-left: auto; margin-right: 78px; text-align: right; }
.src a, .article a { text-decoration: none; }
.src a { color: #2a4e94; text-decoration: underline; }
.dotted { border-bottom: 1px dotted #666; }
.num { position: absolute; right: 100%; width: 40px; text-align: right; padding-right: 11px; }
.outer { margin-left: -72px; padding-left: 24px; }
.outer .num { left: 0; right: auto; width: 24px; text-align: left; padding: 0; }

/* wikipedia */
.wiki { flex: 1; min-height: 0; background: #fff; display: flex; position: relative; overflow: hidden; font-size: 9.380px; color: #202122; }
.wiki a { color: #3366cc; }
.toc { width: 156px; margin-left: 35px; flex: none; padding-top: 18px; line-height: 12px; }
.toc-head { padding-bottom: 4px; border-bottom: 1px solid #e4e4e6; color: #54595d; height: 17px; }
.t { display: block; padding: 0; margin-top: 6px; margin-bottom: 0; }
.toc-head + .t { margin-top: 2px; }
.cur { font-weight: 700; color: #202122; margin-bottom: 2px; }
.cur + .t { margin-bottom: 2px; }
.t.c { margin-left: 5px; }
.t.tw { position: relative; }
.t.tw::before { content: ""; position: absolute; left: -9px; top: 2px; width: 4px; height: 4px; border-right: 1px solid #555; border-bottom: 1px solid #555; transform: rotate(45deg); }
sup { font-size: 75%; line-height: 0; }
.article { width: 640px; margin-left: 33px; margin-top: -9px; flex: none; line-height: 15px; font-size: 9.300px; }
.article p { margin: 0; }
.article p.gap { margin-top: 5px; }
.article ul { margin: 4px 0 5px; padding: 0 0 0 15px; }
.article li { margin-bottom: .860px; }
.article li:last-child { margin-bottom: 0; }
.article a.red { color: #dd3333; }
.article h2 { font: 400 14px/20px "Liberation Serif", "Times New Roman", serif; color: #000; margin: 13px 0 4px; height: 23px; border-bottom: 1px solid #a2a9b1; padding-top: 2px; }
.article h2.h2b { border: 0; margin-top: 12px; }
.article h2 sup { color: #3366cc; font-size: 75%; }
.edit { font: 400 8.400px/1 "Liberation Sans", sans-serif; margin-left: 8px; color: #54595d; }
.fs { position: absolute; right: 21px; top: 897px; width: 22px; height: 22px; padding: 3px; background: #fff; border: 1px solid #8a939e; }
.scroll { position: absolute; right: 0; top: 0; bottom: 0; width: 15px; background: #f1f1f1; display: flex; flex-direction: column; align-items: center; }
.thumb { width: 11px; height: 127px; background: #c1c1c1; margin-top: 98px; }
.up, .down { width: 0; height: 0; border: 3.500px solid transparent; position: absolute; left: 4px; }
.up { top: 5px; border-bottom: 4px solid #505050; border-top: 0; }
.down { bottom: 5px; border-top: 4px solid #505050; border-bottom: 0; }

/* taskbar */
.taskbar { height: 44px; flex: none; display: flex; align-items: center; background: linear-gradient(to right, #30333b 0, #30333b 48%, #473a33 56%, #3e3a3d 66%, #3b393d 74%, #463a36 84%, #463a36 100%); color: #ddd; }
.launcher { width: 26px; height: 32px; margin-left: 13px; }
.pager { display: flex; margin-left: 13px; height: 36px; }
.pg { width: 65px; background: #3f3f46; }
.pg.on { width: 64px; background: linear-gradient(to right, #5b8199 0 31px, #729db4 31px); border: 1px solid #7bb0cc; position: relative; }
.pg.on i { position: absolute; left: 26px; top: 10px; width: 10px; height: 13px; background: #7ba3b8; }
.tk { width: 52px; height: 44px; flex: none; display: flex; align-items: center; justify-content: center; position: relative; }
.tk svg { height: 28px; width: 30px; }
.tfold { margin-left: 2px; }
.tgit { color: #e8e0ee; }
.run { border-top: 3px solid; padding-bottom: 1px; }
.run svg { height: 32px; width: 32px; }
.blue { background: #3e5d73; border-top-color: #4a8ab0; width: 50px; margin: 0 1px 0 2px; }
.grey { background: #484c55; border-top-color: #62666e; width: 50px; margin: 0 1px; }
.plusbadge { position: absolute; left: 19px; bottom: 0; width: 11px; height: 11px; border-radius: 50%; background: #1e8a50; font: 700 10px/10px "Liberation Sans", sans-serif; color: #fff; text-align: center; }
.tray { margin-left: auto; display: flex; align-items: center; gap: 10px; padding-right: 14px; }
.tray > svg { width: 20px; height: 24px; }
.tray .arrow { width: 14px; height: 12px; margin-left: 1px; }
.clock { width: 100px; text-align: center; margin-left: 0; color: #c9c9c9; }
.time { font: 16.500px/20px "Noto Sans", sans-serif; white-space: nowrap; }
.time small { font-size: 11px; vertical-align: 3px; }
.date { font: 13px/15px "Noto Sans", sans-serif; margin-top: 0; }
.tray .desk { width: 20px; height: 30px; margin-left: 9px; }
```
